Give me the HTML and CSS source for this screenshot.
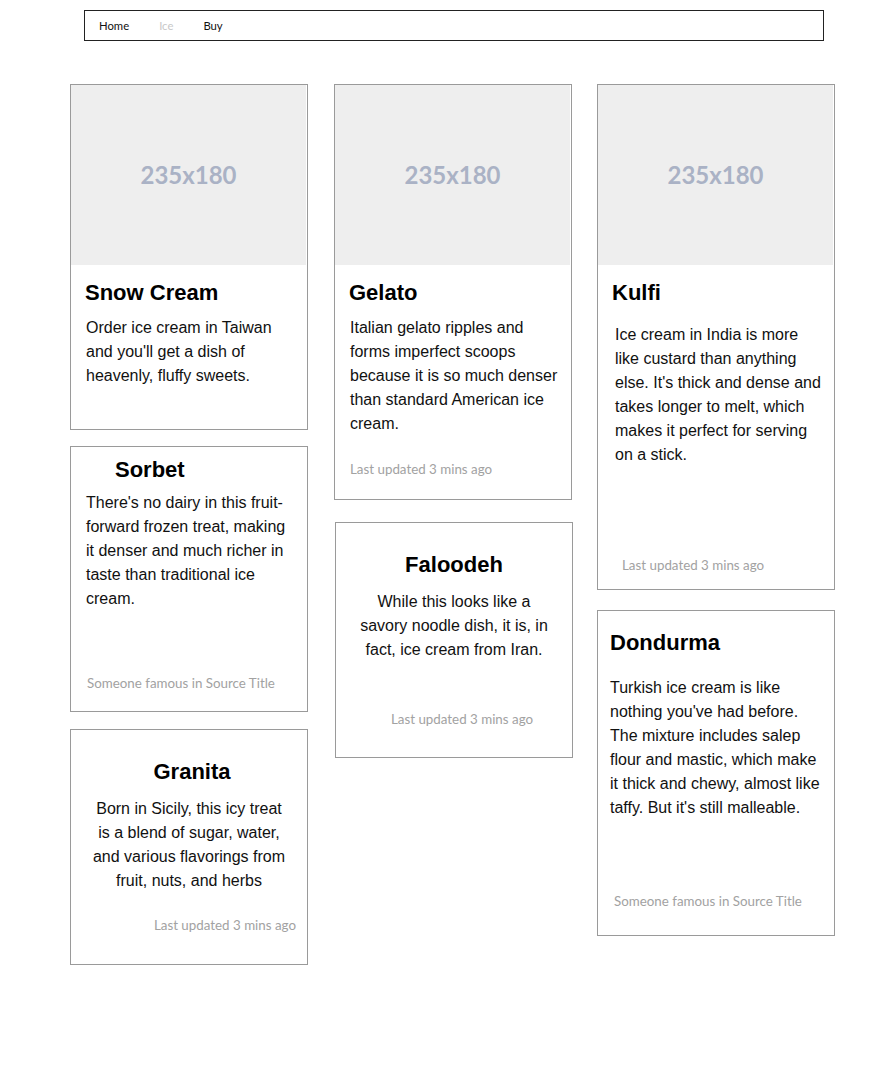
FILE: index.html
```html
<!DOCTYPE html>
<html lang="en">
<head>
<meta charset="utf-8">
<title>Ice cream</title>
<link rel="stylesheet" href="styles.css">
</head>
<body>
<nav class="nav">
  <a class="nav-link" href="#">Home</a>
  <a class="nav-link nav-link--muted" href="#">Ice</a>
  <a class="nav-link" href="#">Buy</a>
</nav>
<main class="grid">
  <div class="col col-1">
    <article class="card card--snow">
      <div class="card-img">235x180</div>
      <h2 class="card-title">Snow Cream</h2>
      <p class="card-text">Order ice cream in Taiwan and you'll get a dish of heavenly, fluffy sweets.</p>
    </article>
    <article class="card card--sorbet">
      <h2 class="card-title">Sorbet</h2>
      <p class="card-text">There's no dairy in this fruit-forward frozen treat, making it denser and much richer in taste than traditional ice cream.</p>
      <p class="card-meta">Someone famous in Source Title</p>
    </article>
    <article class="card card--granita">
      <h2 class="card-title">Granita</h2>
      <p class="card-text">Born in Sicily, this icy treat is a blend of sugar, water, and various flavorings from fruit, nuts, and herbs</p>
      <p class="card-meta">Last updated 3 mins ago</p>
    </article>
  </div>
  <div class="col col-2">
    <article class="card card--gelato">
      <div class="card-img">235x180</div>
      <h2 class="card-title">Gelato</h2>
      <p class="card-text">Italian gelato ripples and forms imperfect scoops because it is so much denser than standard American ice cream.</p>
      <p class="card-meta">Last updated 3 mins ago</p>
    </article>
    <article class="card card--faloodeh">
      <h2 class="card-title">Faloodeh</h2>
      <p class="card-text">While this looks like a savory noodle dish, it is, in fact, ice cream from Iran.</p>
      <p class="card-meta">Last updated 3 mins ago</p>
    </article>
  </div>
  <div class="col col-3">
    <article class="card card--kulfi">
      <div class="card-img">235x180</div>
      <h2 class="card-title">Kulfi</h2>
      <p class="card-text">Ice cream in India is more like custard than anything else. It's thick and dense and takes longer to melt, which makes it perfect for serving on a stick.</p>
      <p class="card-meta">Last updated 3 mins ago</p>
    </article>
    <article class="card card--dondurma">
      <h2 class="card-title">Dondurma</h2>
      <p class="card-text">Turkish ice cream is like nothing you've had before. The mixture includes salep flour and mastic, which make it thick and chewy, almost like taffy. But it's still malleable.</p>
      <p class="card-meta">Someone famous in Source Title</p>
    </article>
  </div>
</main>
</body>
</html>
```

FILE: styles.css
```css
* { box-sizing: border-box; }

body {
  margin: 0;
  background: #fff;
  color: #000;
  font-family: "Liberation Sans", Arial, sans-serif;
}

.nav {
  display: flex;
  align-items: center;
  gap: 30px;
  width: 740px;
  height: 31px;
  margin: 10px 0 0 84px;
  padding-left: 14px;
  border: 1px solid #222;
  font-family: Lato, "Open Sans", sans-serif;
  font-size: 11.3px;
}

.nav-link {
  color: #111;
  text-decoration: none;
}

.nav-link--muted { color: #c8c8c8; }

.grid {
  display: flex;
  align-items: flex-start;
  margin-top: 43px;
  padding-left: 70px;
}

.col {
  display: flex;
  flex-direction: column;
  width: 238px;
}

.col-1 { margin-right: 26px; }
.col-2 { margin-right: 25px; }

.card {
  width: 238px;
  border: 1px solid #9a9a9a;
  background: #fff;
}

.card-img {
  display: flex;
  align-items: center;
  justify-content: center;
  width: 235px;
  height: 180px;
  padding-bottom: 2px;
  background: #eeeeee;
  color: #aab2c5;
  font-family: Lato, "Open Sans", sans-serif;
  font-weight: 700;
  font-size: 24px;
}

.card-title {
  margin: 0;
  font-size: 22px;
  line-height: 26px;
  font-weight: 700;
}

.card-text {
  margin: 0;
  font-size: 16px;
  line-height: 24px;
  color: #111;
}

.card-meta {
  margin: 0;
  font-family: Lato, "Open Sans", sans-serif;
  font-size: 13.35px;
  line-height: 18px;
  color: #a2a2a2;
}

/* Snow Cream */
.card--snow { padding-bottom: 41px; }
.card--snow .card-title { margin: 15px 0 0 14px; }
.card--snow .card-text { margin: 10px 10px 0 15px; }

/* Sorbet */
.card--sorbet { margin-top: 16px; padding: 10px 0 19px; }
.card--sorbet .card-title { margin-left: 44px; }
.card--sorbet .card-text { margin: 8px 10px 0 15px; }
.card--sorbet .card-meta { margin: 63px 0 0 16px; }

/* Granita */
.card--granita { margin-top: 17px; padding: 29px 0 30px; text-align: center; }
.card--granita .card-title { padding-left: 6px; }
.card--granita .card-text { margin: 12px 20px 0; }
.card--granita .card-meta { margin: 23px 11px 0 0; text-align: right; }

/* Gelato */
.card--gelato { padding-bottom: 21px; }
.card--gelato .card-title { margin: 15px 0 0 14px; }
.card--gelato .card-text { margin: 10px 10px 0 15px; }
.card--gelato .card-meta { margin: 24px 0 0 15px; }

/* Faloodeh */
.card--faloodeh { margin: 22px 0 0 1px; padding: 29px 0 29px; text-align: center; }
.card--faloodeh .card-text { margin: 12px 20px 0; }
.card--faloodeh .card-meta { margin-top: 48px; padding-left: 16px; }

/* Kulfi */
.card--kulfi { padding-bottom: 15px; }
.card--kulfi .card-title { margin: 15px 0 0 14px; }
.card--kulfi .card-text { margin: 17px 11px 0 17px; }
.card--kulfi .card-meta { margin: 89px 0 0 24px; }

/* Dondurma */
.card--dondurma { margin-top: 20px; padding: 19px 0 25px; }
.card--dondurma .card-title { margin-left: 12px; }
.card--dondurma .card-text { margin: 20px 12px 0 12px; }
.card--dondurma .card-meta { margin: 72px 0 0 16px; }
```
